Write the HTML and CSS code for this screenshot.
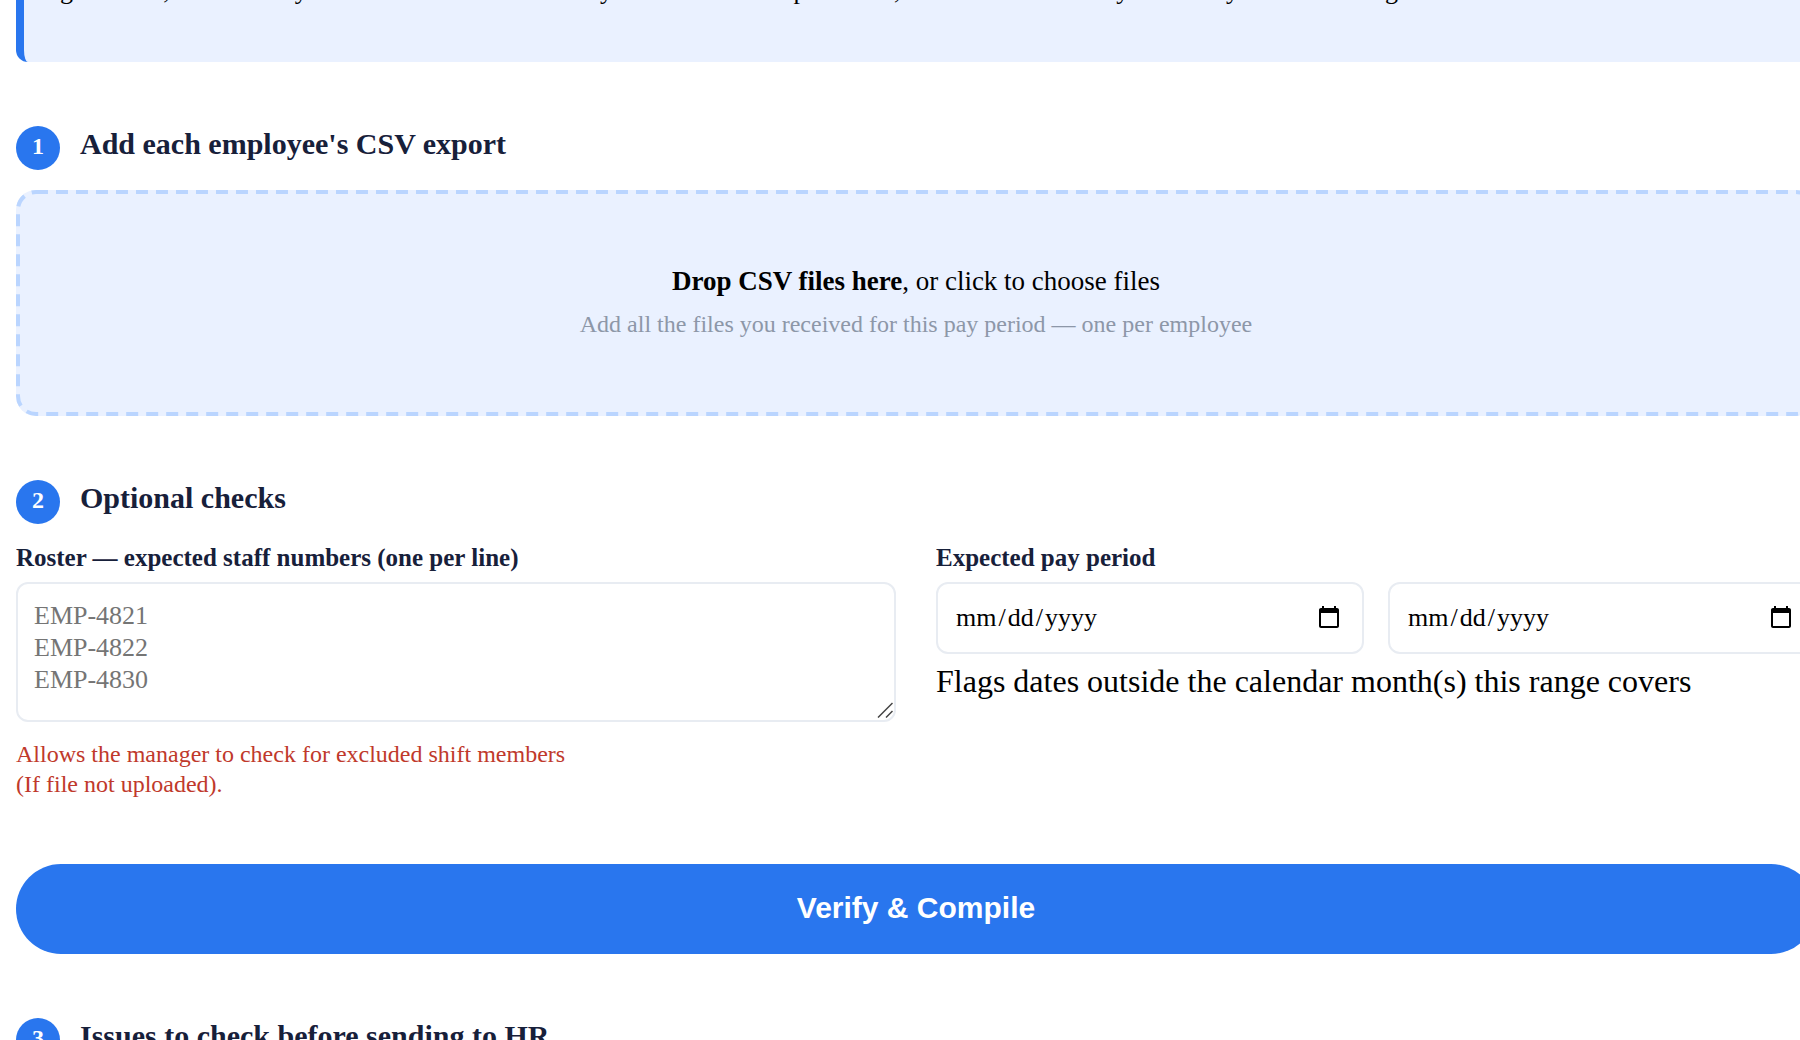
FILE: index.html
```html
<!DOCTYPE html>
<html lang="en">
<head>
  <meta charset="UTF-8" />
  <meta name="viewport" content="width=device-width, initial-scale=1" />
  <title>Timesheet Compiler</title>
  <link rel="stylesheet" href="styles.css">
</head>
<body>
  <main class="page">

    <div class="notice">
      <p>good files, the tool only checks the hours and weekly totals for each report itself, and it never edits any data entry without telling HR.</p>
    </div>

    <!-- Step 1: files -->
    <section class="section">
      <div class="step">
        <span class="step-num">1</span>
        <h2>Add each employee's CSV export</h2>
      </div>
      <button type="button" class="dropzone" id="dropzone">
        <svg class="drop-border" aria-hidden="true"><rect x="2" y="2" rx="18" /></svg>
        <span class="drop-title"><strong>Drop CSV files here</strong>, or click to choose files</span>
        <span class="drop-hint">Add all the files you received for this pay period — one per employee</span>
      </button>
      <input type="file" id="fileInput" accept=".csv" aria-label="CSV files" multiple hidden />
    </section>

    <!-- Step 2: roster and period -->
    <section class="section">
      <div class="step">
        <span class="step-num">2</span>
        <h2>Optional checks</h2>
      </div>
      <div class="checks">
        <div class="field">
          <label for="roster">Roster — expected staff numbers (one per line)</label>
          <div class="roster-wrap">
            <textarea id="roster" placeholder="EMP-4821&#10;EMP-4822&#10;EMP-4830"></textarea>
            <svg class="grip" viewBox="0 0 16 16" aria-hidden="true">
              <path d="M1 15.500L15.500 1M9 15.500L15.500 9" />
            </svg>
          </div>
          <p class="warn">Allows the manager to check for excluded shift members<br>(If file not uploaded).</p>
        </div>
        <div class="field">
          <label for="periodStart">Expected pay period</label>
          <div class="dates">
            <input type="date" id="periodStart" />
            <input type="date" id="periodEnd" aria-label="Pay period end" />
          </div>
          <p class="note">Flags dates outside the calendar month(s) this range covers</p>
        </div>
      </div>
    </section>

    <button type="button" class="btn-verify">Verify &amp; Compile</button>

    <!-- Step 3: results -->
    <section class="section">
      <div class="step">
        <span class="step-num">3</span>
        <h2>Issues to check before sending to HR</h2>
      </div>
    </section>

  </main>

  <script>
    const dropzone = document.getElementById('dropzone');
    const fileInput = document.getElementById('fileInput');

    dropzone.addEventListener('click', () => fileInput.click());
  </script>
</body>
</html>
```
FILE: styles.css
```css
* {
  box-sizing: border-box;
}

:root {
  --blue: #2976ee;
  --blue-light: #eaf1ff;
  --blue-dash: #bad5ff;
  --navy: #17203a;
  --line: #e8ecf2;
}

body {
  margin: 0;
  height: 100vh;
  overflow: hidden;
  background: #fff;
  color: #000;
  font-family: "Liberation Serif", "Times New Roman", serif;
  font-size: 32px;
}

h2, p {
  margin: 0;
}

/* the page runs a little past the top and right edges */
.page {
  width: calc(100% + 16px);
  margin-top: -60px;
  padding-left: 16px;
}

.notice {
  padding: 32px 36px 52px;
  border-left: 8px solid var(--blue);
  border-radius: 12px;
  background: var(--blue-light);
}

.notice p {
  font-size: 26px;
  line-height: 38px;
}

.section {
  margin-top: 64px;
}

/* step header */
.step {
  display: flex;
  align-items: flex-start;
  gap: 20px;
  margin-bottom: 20px;
}

.step-num {
  flex: none;
  width: 44px;
  height: 44px;
  border-radius: 50%;
  background: var(--blue);
  color: #fff;
  font-size: 24px;
  font-weight: bold;
  line-height: 40px;
  text-align: center;
}

.step h2 {
  color: var(--navy);
  font-size: 30px;
  line-height: 36px;
}

.dropzone {
  position: relative;
  display: flex;
  flex-direction: column;
  align-items: center;
  gap: 12px;
  width: 100%;
  padding: 76px 40px;
  border: none;
  border-radius: 20px;
  background: var(--blue-light);
  color: #000;
  font-family: inherit;
  cursor: pointer;
}

/* long dashes, wider than a dashed border gives */
.drop-border {
  position: absolute;
  inset: 0;
  width: 100%;
  height: 100%;
}

.drop-border rect {
  width: calc(100% - 4px);
  height: calc(100% - 4px);
  fill: none;
  stroke: var(--blue-dash);
  stroke-width: 4;
  stroke-dasharray: 12 8;
}

.drop-title {
  font-size: 27px;
  line-height: 30px;
}

.drop-hint {
  color: #8d97a8;
  font-size: 24px;
  line-height: 32px;
}

/* optional checks */
.checks {
  display: grid;
  grid-template-columns: 1fr 1fr;
  gap: 40px;
}

.field label {
  display: block;
  margin-bottom: 10px;
  color: var(--navy);
  font-size: 25px;
  font-weight: bold;
  line-height: 28px;
}

.field textarea,
.field input {
  width: 100%;
  border: 2px solid var(--line);
  border-radius: 12px;
  background: #fff;
  color: #000;
  font-family: inherit;
  font-size: 26px;
}

.roster-wrap {
  position: relative;
}

.field textarea {
  display: block;
  height: 140px;
  padding: 16px;
  line-height: 32px;
  resize: vertical;
}

.field textarea::-webkit-resizer {
  background: transparent;
}

.grip {
  position: absolute;
  right: 3px;
  bottom: 4px;
  width: 16px;
  height: 16px;
  fill: none;
  stroke: #444;
  stroke-width: 1.5;
  pointer-events: none;
}

.dates {
  display: flex;
  gap: 24px;
}

.field input {
  height: 72px;
  padding: 0 18px 0 16px;
}

.field input::-webkit-datetime-edit-month-field,
.field input::-webkit-datetime-edit-day-field,
.field input::-webkit-datetime-edit-year-field {
  padding: 0 2px;
}

.warn {
  margin-top: 17px;
  color: #c0392b;
  font-size: 24px;
  line-height: 30px;
}

.note {
  margin-top: 9px;
  line-height: 36px;
}

.btn-verify {
  display: block;
  width: 100%;
  height: 90px;
  margin-top: 65px;
  padding: 0 0 2px;
  border: none;
  border-radius: 45px;
  background: var(--blue);
  color: #fff;
  font-family: "Liberation Sans", Arial, sans-serif;
  font-size: 30px;
  font-weight: bold;
  cursor: pointer;
}
```
